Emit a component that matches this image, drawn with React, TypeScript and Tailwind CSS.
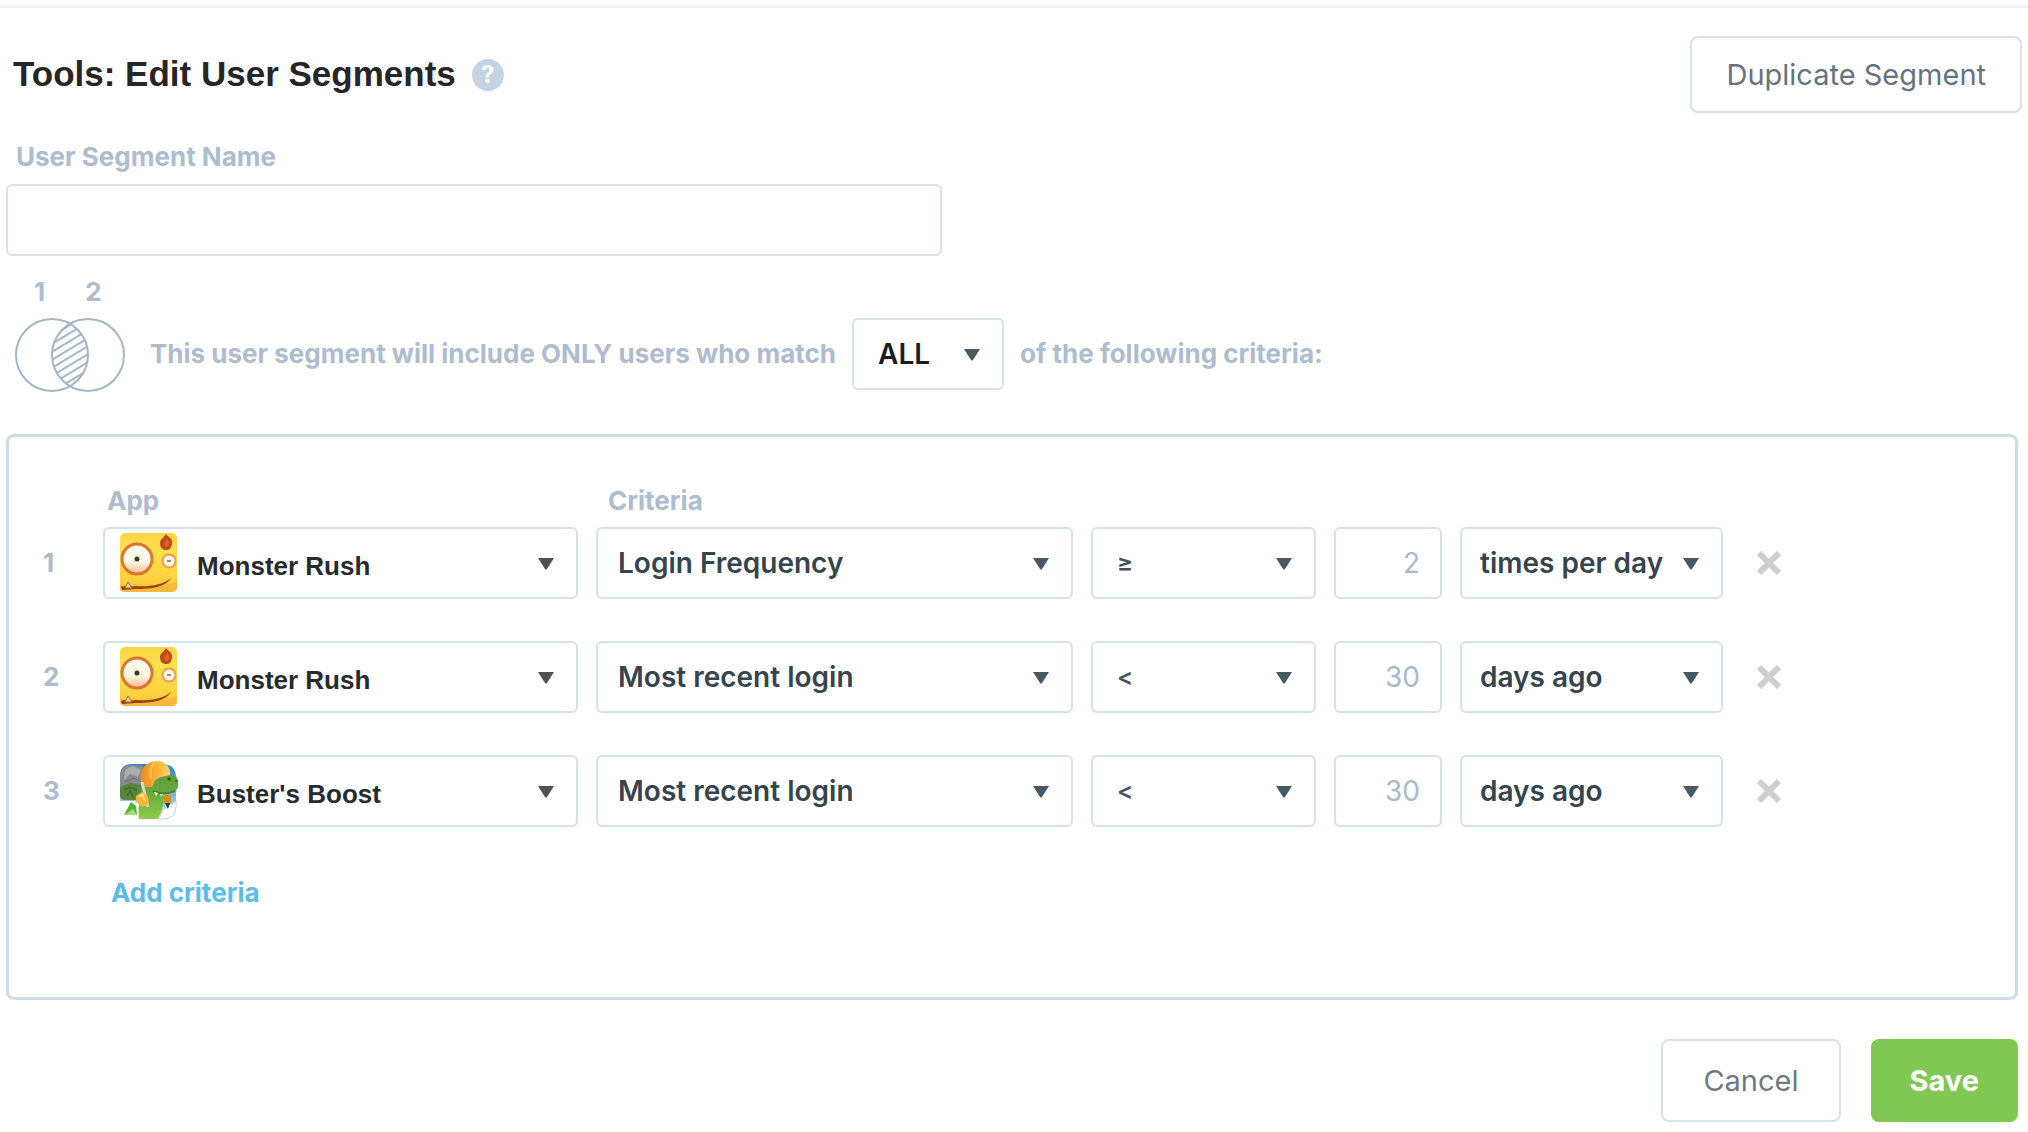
import type { ReactNode } from "react";

type Game = "monster" | "buster";

type Criterion = {
  game: Game;
  criteria: string;
  operator: string;
  value: number;
  unit: string;
};

const GAMES: Record<Game, string> = {
  monster: "Monster Rush",
  buster: "Buster's Boost",
};

const CRITERIA: Criterion[] = [
  { game: "monster", criteria: "Login Frequency", operator: "≥", value: 2, unit: "times per day" },
  { game: "monster", criteria: "Most recent login", operator: "<", value: 30, unit: "days ago" },
  { game: "buster", criteria: "Most recent login", operator: "<", value: 30, unit: "days ago" },
];

const GRID = "grid grid-cols-[42px_475fr_477fr_225fr_108fr_263fr_240fr] gap-x-[18px]";
const LABEL = "text-[26px] leading-8 font-bold text-[#adbccf]";
const FIELD = "h-[72px] w-full rounded-md border-2 border-[#d3e2ec] bg-white";

function MonsterIcon() {
  return (
    <svg viewBox="0 0 60 60" className="size-[60px]" aria-hidden="true">
      <defs>
        <linearGradient id="monster-skin" x1="0" y1="0" x2="0" y2="1">
          <stop offset="0" stopColor="#fbd548" />
          <stop offset="0.3" stopColor="#fde04a" />
          <stop offset="0.85" stopColor="#fbd03c" />
          <stop offset="1" stopColor="#f59b35" />
        </linearGradient>
        <linearGradient id="monster-eye" x1="0" y1="0" x2="0" y2="1">
          <stop offset="0.55" stopColor="#fffbe9" />
          <stop offset="1" stopColor="#f3bd88" />
        </linearGradient>
      </defs>
      <rect x="1" y="0" width="57" height="59" rx="5" fill="url(#monster-skin)" />
      <path d="M1 53h15c18 2 33-1 42-4v5a5 5 0 0 1-5 5H6a5 5 0 0 1-5-5z" fill="#f8b83a" />
      <circle cx="18" cy="26" r="15" fill="url(#monster-eye)" stroke="#dd7430" strokeWidth="3" />
      <circle cx="18" cy="26" r="2.5" fill="#3d3629" />
      <circle cx="50" cy="28" r="6.5" fill="#fff8e6" stroke="#ee9a50" strokeWidth="2" />
      <path d="M48 28h4" stroke="#a58d6a" strokeWidth="2" />
      <path d="M47 1c2 3 7 4 6 10-1 5-3 6-6 6s-6-2-6-7c0-4 4-5 6-9z" fill="#bf4a20" />
      <path d="M48 5c1 3 3 4 2 7-1 2-3 2-4 1-1-3 1-4 2-8z" fill="#d9691f" />
      <path d="M2 54c4-2 9 0 14-1 14 1 28-1 36-8-5 9-20 11-35 11l-14 1z" fill="#984415" />
      <path d="M6 55l3-6 4 6z" fill="#e8d3ad" stroke="#ad6c2e" />
    </svg>
  );
}

function BusterIcon() {
  return (
    <svg viewBox="0 0 60 60" className="size-[60px]" aria-hidden="true">
      <defs>
        <linearGradient id="buster-sky" x1="0" y1="0" x2="0" y2="1">
          <stop offset="0" stopColor="#2f83cf" />
          <stop offset="0.7" stopColor="#8cc7ec" />
          <stop offset="1" stopColor="#ffffff" />
        </linearGradient>
        <linearGradient id="buster-helmet" x1="0" y1="0" x2="1" y2="0">
          <stop offset="0" stopColor="#f28a1c" />
          <stop offset="0.55" stopColor="#fbb13a" />
          <stop offset="1" stopColor="#ffd768" />
        </linearGradient>
        <linearGradient id="buster-skin" x1="0" y1="0" x2="0" y2="1">
          <stop offset="0" stopColor="#5b9e35" />
          <stop offset="0.4" stopColor="#66a93a" />
          <stop offset="1" stopColor="#8ccb4c" />
        </linearGradient>
      </defs>
      <path d="M13 3h30q14 0 14 14v27q0 14-14 14h-8V40H1V15Q1 3 13 3z" fill="url(#buster-sky)" />
      <path d="M57 40v5q0 13-14 13h-3l4-9z" fill="#fff" stroke="#bdd5e3" />
      <path d="M1 17Q1 4 13 4l11 1v19L1 27z" fill="#888c8d" />
      <path d="M6 9l8-4 8 4-3 7-8-3-6 6z" fill="#a9acac" />
      <path d="M5 21l10-4 7 4" fill="none" stroke="#6f7274" />
      <path d="M1 26l10-4 11 2 2 15H6q-5 0-5-5z" fill="#58873c" />
      <path d="M5 29q7-5 13 1M8 35l3-5 3 6" fill="none" stroke="#47752f" strokeWidth="2" />
      <path d="M5 54l7-13 5 4 1 9z" fill="#4fb32c" />
      <path d="M5 54l9-6 4 6z" fill="#a0dd78" />
      <path d="M45 34h7v7l-3 6-4-6z" fill="#d48f1e" />
      <path d="M46 42l3 6 2-6z" fill="#333b43" />
      <path d="M20 58c-1-10 0-22 4-34 4-6 9-6 14-5l7-5c7-2 12 0 14 5 1 6 0 10-5 12l-10 3c2 9-2 18-5 24z" fill="url(#buster-skin)" />
      <path d="M34 30c6 3 15 3 22 0" fill="none" stroke="#4a8430" strokeWidth="2" />
      <path d="M35 31l2 4 2-3M41 33l1 3 2-3" fill="#fff" />
      <circle cx="50" cy="18" r="1.5" fill="#26431d" />
      <circle cx="57" cy="20" r="1" fill="#31551f" />
      <path d="M22 21C20 8 28 0 38 0c8 0 14 6 13 14l-9 2c-5 1-7 5-9 10h-7z" fill="url(#buster-helmet)" />
      <path d="M37 1c-6 3-6 10-5 16" fill="none" stroke="#ffc552" strokeWidth="2" />
      <path d="M23 21l6 25" stroke="#d6d9d3" strokeWidth="3" />
      <path d="M17 35l6-4 6 4 1 8-7 3-6-5z" fill="#f6b73b" />
      <path d="M20 35l4-1 2 6" fill="none" stroke="#ffde85" strokeWidth="2" />
    </svg>
  );
}

function VennIcon() {
  return (
    <svg viewBox="0 0 112 76" className="h-[76px] w-[112px]" fill="none" aria-hidden="true">
      <defs>
        <clipPath id="venn-left">
          <circle cx="38" cy="39" r="36" />
        </clipPath>
        <clipPath id="venn-right">
          <circle cx="74" cy="39" r="36" />
        </clipPath>
      </defs>
      <g stroke="#a3b5c7" strokeWidth="2">
        <circle cx="38" cy="39" r="36" />
        <circle cx="74" cy="39" r="36" />
        <g clipPath="url(#venn-left)">
          <g clipPath="url(#venn-right)">
            <path d="M36 21L76 -3M36 29L76 5M36 37L76 13M36 45L76 21M36 53L76 29M36 61L76 37M36 69L76 45M36 77L76 53M36 85L76 61" />
          </g>
        </g>
      </g>
    </svg>
  );
}

function Dropdown({ label, value, className, arrow = "text-[#485964]", icon }: {
  label: string;
  value: string;
  className: string;
  arrow?: string;
  icon?: ReactNode;
}) {
  return (
    <div className="relative">
      {icon && <div className="pointer-events-none absolute top-1.5 left-4">{icon}</div>}
      <select aria-label={label} defaultValue={value} className={`${FIELD} appearance-none ${className}`}>
        <option>{value}</option>
      </select>
      <svg viewBox="0 0 16 12" className={`pointer-events-none absolute top-[31px] right-6 h-3 w-4 ${arrow}`} aria-hidden="true">
        <path d="M0 0h16L9 11q-1 1-2 0z" fill="currentColor" />
      </svg>
    </div>
  );
}

function CriterionRow({ index, row }: { index: number; row: Criterion }) {
  return (
    <div className={`${GRID} items-center`}>
      <div className={LABEL}>{index}</div>
      <Dropdown
        label={`App ${index}`}
        value={GAMES[row.game]}
        className="pt-1.5 pl-[92px] font-['Liberation_Sans',sans-serif] text-[26px] font-bold text-[#262b2e]"
        arrow="text-[#505050]"
        icon={row.game === "monster" ? <MonsterIcon /> : <BusterIcon />}
      />
      <Dropdown label={`Criteria ${index}`} value={row.criteria} className="pl-5 text-[28px] font-semibold text-[#36444d]" />
      <Dropdown label={`Operator ${index}`} value={row.operator} className="pl-6 text-2xl font-semibold text-[#46535b]" />
      <input
        type="text"
        aria-label={`Value ${index}`}
        defaultValue={row.value}
        className={`${FIELD} pr-5 text-right text-[28px] text-[#a9b9cd]`}
      />
      <Dropdown label={`Unit ${index}`} value={row.unit} className="pl-[18px] text-[28px] font-semibold text-[#36444d]" />
      <button type="button" aria-label={`Remove criteria ${index}`} className="ml-4 size-6 text-[#cecece]">
        <svg viewBox="0 0 24 24" className="size-6" stroke="currentColor" strokeWidth="6" aria-hidden="true">
          <path d="M2 2l20 20M22 2L2 22" />
        </svg>
      </button>
    </div>
  );
}

export default function App() {
  return (
    <main className="bg-white pt-[5px] font-['Inter',sans-serif]">
      <div className="border-t-3 border-[#eff4f9] pr-2.5 pb-[11px] pl-1.5">
        <header className="-mr-1 flex items-center justify-between pt-7 pl-[7px]">
          <div className="flex items-center gap-4">
            <h1 className="font-['Liberation_Sans',sans-serif] text-[35px] font-bold text-[#262626]">
              Tools: Edit User Segments
            </h1>
            <button type="button" aria-label="Help" className="size-8 rounded-full bg-[#c3d3e2] text-2xl leading-8 font-bold text-white">
              ?
            </button>
          </div>
          <button type="button" className="h-[77px] rounded-lg border-2 border-[#d7e2ec] px-[34px] text-[29px] text-[#65737e]">
            Duplicate Segment
          </button>
        </header>

        <label htmlFor="segment-name" className={`mt-7 block pl-2.5 ${LABEL}`}>
          User Segment Name
        </label>
        <input id="segment-name" type="text" className={`${FIELD} mt-[11px] block max-w-[936px] px-5 text-[28px]`} />

        <div className={`mt-5 flex gap-10 pl-7 ${LABEL}`}>
          <span>1</span>
          <span>2</span>
        </div>
        <div className={`mt-2 flex items-center pl-2 ${LABEL}`}>
          <VennIcon />
          <span className="ml-6">This user segment will include ONLY users who match</span>
          <div className="mx-4 w-[152px]">
            <Dropdown label="Match type" value="ALL" className="pl-6 text-[28px] font-semibold text-[#1c1c1c]" />
          </div>
          <span>of the following criteria:</span>
        </div>

        <section className="mt-[42px] rounded-lg border-3 border-[#cfdce8] px-[34px] pt-12 pb-[86px]">
          <div className={`${GRID} ${LABEL}`}>
            <div className="col-start-2 pl-1">App</div>
            <div className="pl-3">Criteria</div>
          </div>
          <div className="mt-2.5 flex flex-col gap-[42px]">
            {CRITERIA.map((row, i) => (
              <CriterionRow key={i} index={i + 1} row={row} />
            ))}
          </div>
          <button type="button" className="mt-12 ml-[68px] block text-[26px] leading-9 font-bold text-[#5cbce9]">
            Add criteria
          </button>
        </section>

        <footer className="mt-[39px] flex justify-end gap-[30px]">
          <button type="button" className="h-[83px] rounded-lg border-2 border-[#d7e2ec] px-10 text-[29px] text-[#6d7a84]">
            Cancel
          </button>
          <button type="button" className="h-[83px] rounded-lg bg-[#7fc853] px-[39px] text-[29px] font-bold text-white">
            Save
          </button>
        </footer>
      </div>
    </main>
  );
}
